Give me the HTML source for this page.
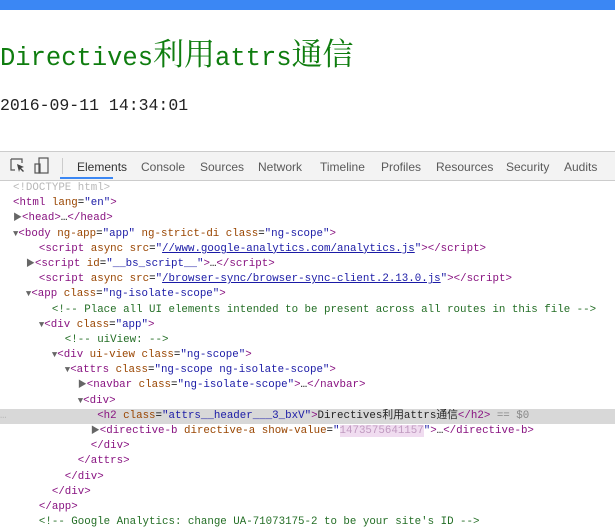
<!DOCTYPE html>
<html><head><meta charset="utf-8"><style>
body{margin:0;width:615px;height:527px;overflow:hidden;background:#fff;position:relative;font-family:"Liberation Sans",sans-serif}
.bar{position:absolute;left:0;top:0;width:615px;height:10px;background:#3b87f4}
.title{position:absolute;left:0;top:34px;color:#0f7d0f;white-space:nowrap;line-height:36px}
.title .l{font-family:"Liberation Mono",monospace;font-size:25.5px}
.title .c{font-family:"Noto Serif CJK SC","Noto Sans CJK SC",serif;font-size:31px}
.date{position:absolute;left:0;top:95px;font-family:"Liberation Mono",monospace;font-size:16.5px;color:#222;line-height:22px}
.tb{position:absolute;left:0;top:151px;width:615px;height:28px;background:#f3f3f3;border-top:1px solid #ccc;border-bottom:1px solid #ccc}
.tab{position:absolute;top:8px;font-size:12px;color:#5a5a5a}
.ul{position:absolute;left:60px;top:25px;width:53px;height:2px;background:#3b87f4}
.sep{position:absolute;left:62px;top:6px;width:1px;height:16px;background:#ccc}
.code{position:absolute;left:0;top:181px;width:615px;font-family:"Liberation Mono","Noto Sans CJK SC",monospace;font-size:10.8px;line-height:15.2px}
.r{height:15.2px;position:relative;white-space:pre;overflow:hidden}
.hl{background:#d8d8d8}
.t{color:#881280}.b{color:#a894a6}.a{color:#994500}.v{color:#1a1aa6}.cm{color:#236e25}.g{color:#b8b8b8}.k{color:#222}
.ar{color:#666;font-size:9px}
u{color:#1a1aa6}
</style></head><body>
<div class="bar"></div>
<div class="title"><span class="l">Directives</span><span class="c">利用</span><span class="l">attrs</span><span class="c">通信</span></div>
<div class="date">2016-09-11 14:34:01</div>
<div class="tb">
<svg style="position:absolute;left:10px;top:6px" width="16" height="16" viewBox="0 0 16 16"><path d="M1 1h11v4M1 1v11h4" fill="none" stroke="#555" stroke-width="1.2"/><path d="M7 6l7 3-3 1 3 3-1 1-3-3-1 3z" fill="#444"/></svg>
<svg style="position:absolute;left:34px;top:5px" width="16" height="18" viewBox="0 0 16 18"><rect x="5" y="1" width="9" height="15" fill="none" stroke="#555" stroke-width="1.2"/><rect x="1" y="7" width="5" height="9" fill="none" stroke="#555" stroke-width="1.2"/></svg>
<div class="sep"></div>
<span class="tab" style="left:77px;color:#333">Elements</span>
<span class="tab" style="left:141px">Console</span>
<span class="tab" style="left:200px">Sources</span>
<span class="tab" style="left:258px">Network</span>
<span class="tab" style="left:320px">Timeline</span>
<span class="tab" style="left:381px">Profiles</span>
<span class="tab" style="left:436px">Resources</span>
<span class="tab" style="left:506px">Security</span>
<span class="tab" style="left:564px">Audits</span>
<div class="ul"></div>
</div>
<div class="code"><div class="r">  <span class="g">&lt;!DOCTYPE html&gt;</span></div><div class="r">  <span class="t">&lt;html</span> <span class="a">lang</span>=<span class="v">"en"</span><span class="t">&gt;</span></div><div class="r">  <span class="ar">▶</span><span class="t">&lt;head&gt;</span>…<span class="t">&lt;/head&gt;</span></div><div class="r">  <span class="ar">▼</span><span class="t">&lt;body</span> <span class="a">ng-app</span>=<span class="v">"app"</span> <span class="a">ng-strict-di</span> <span class="a">class</span>=<span class="v">"ng-scope"</span><span class="t">&gt;</span></div><div class="r">      <span class="t">&lt;script</span> <span class="a">async</span> <span class="a">src</span>=<span class="v">"<u>//www.google-analytics.com/analytics.js</u>"</span><span class="t">&gt;&lt;/script&gt;</span></div><div class="r">    <span class="ar">▶</span><span class="t">&lt;script</span> <span class="a">id</span>=<span class="v">"__bs_script__"</span><span class="t">&gt;</span>…<span class="t">&lt;/script&gt;</span></div><div class="r">      <span class="t">&lt;script</span> <span class="a">async</span> <span class="a">src</span>=<span class="v">"<u>/browser-sync/browser-sync-client.2.13.0.js</u>"</span><span class="t">&gt;&lt;/script&gt;</span></div><div class="r">    <span class="ar">▼</span><span class="t">&lt;app</span> <span class="a">class</span>=<span class="v">"ng-isolate-scope"</span><span class="t">&gt;</span></div><div class="r">        <span class="cm">&lt;!-- Place all UI elements intended to be present across all routes in this file --&gt;</span></div><div class="r">      <span class="ar">▼</span><span class="t">&lt;div</span> <span class="a">class</span>=<span class="v">"app"</span><span class="t">&gt;</span></div><div class="r">          <span class="cm">&lt;!-- uiView: --&gt;</span></div><div class="r">        <span class="ar">▼</span><span class="t">&lt;div</span> <span class="a">ui-view</span> <span class="a">class</span>=<span class="v">"ng-scope"</span><span class="t">&gt;</span></div><div class="r">          <span class="ar">▼</span><span class="t">&lt;attrs</span> <span class="a">class</span>=<span class="v">"ng-scope ng-isolate-scope"</span><span class="t">&gt;</span></div><div class="r">            <span class="ar">▶</span><span class="t">&lt;navbar</span> <span class="a">class</span>=<span class="v">"ng-isolate-scope"</span><span class="t">&gt;</span>…<span class="t">&lt;/navbar&gt;</span></div><div class="r">            <span class="ar">▼</span><span class="t">&lt;div&gt;</span></div><div class="r hl"><span class="g">…</span>              <span class="t">&lt;h2</span> <span class="a">class</span>=<span class="v">"attrs__header___3_bxV"</span><span class="t">&gt;</span><span class="k">Directives利用attrs通信</span><span class="t">&lt;/h2&gt;</span> <span class="g" style="color:#888">== $0</span></div><div class="r">              <span class="ar">▶</span><span class="t">&lt;directive-b</span> <span class="a">directive-a</span> <span class="a">show-value</span>=<span class="v">"<span style="background:#f0dcf0;color:#c09ac0">1473575641157</span>"</span><span class="t">&gt;</span>…<span class="t">&lt;/directive-b&gt;</span></div><div class="r">              <span class="t">&lt;/div&gt;</span></div><div class="r">            <span class="t">&lt;/attrs&gt;</span></div><div class="r">          <span class="t">&lt;/div&gt;</span></div><div class="r">        <span class="t">&lt;/div&gt;</span></div><div class="r">      <span class="t">&lt;/app&gt;</span></div><div class="r">      <span class="cm">&lt;!-- Google Analytics: change UA-71073175-2 to be your site's ID --&gt;</span></div></div>
</body></html>
